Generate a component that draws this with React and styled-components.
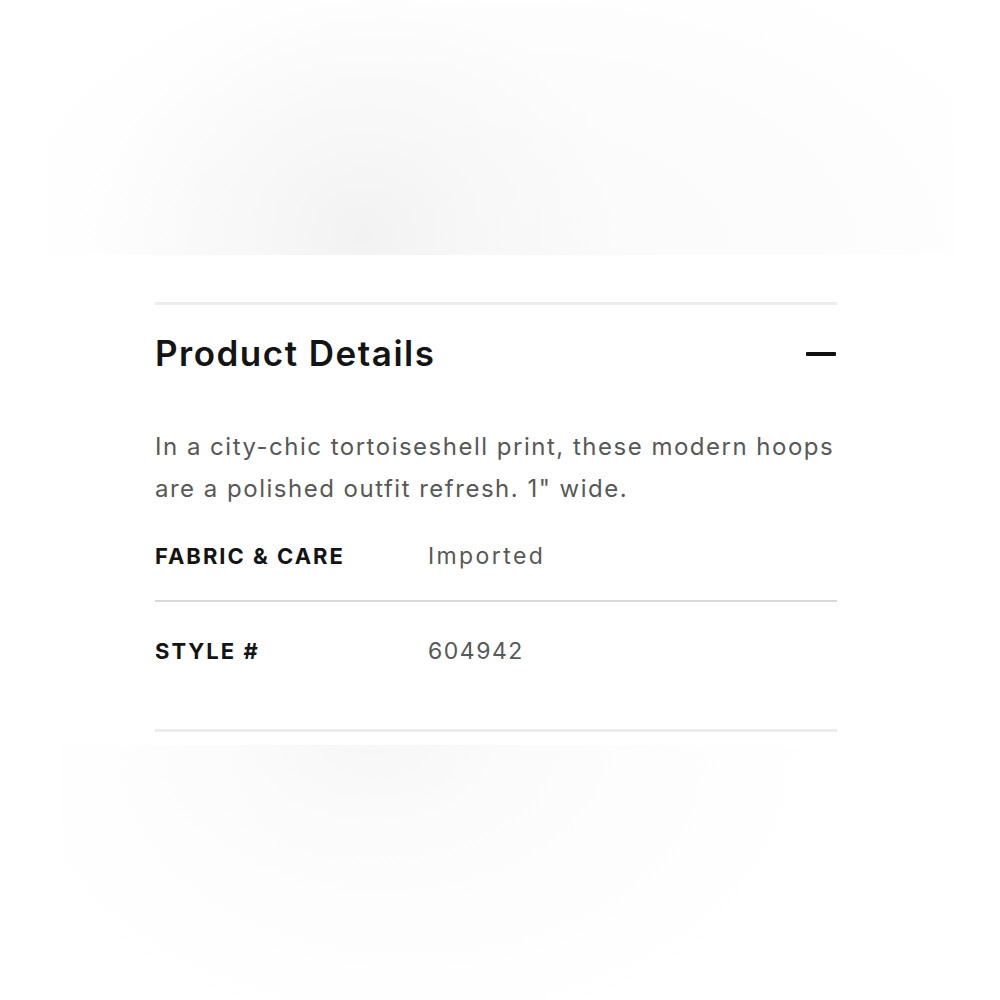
import styled, { createGlobalStyle } from "styled-components";

const GlobalStyle = createGlobalStyle`
  html, body {
    margin: 0;
    padding: 0;
    background: #ffffff;
  }
  body {
    font-family: "Inter", "Noto Sans", sans-serif;
    -webkit-font-smoothing: antialiased;
  }
`;

const Page = styled.div`
  width: 1000px;
  min-height: 1000px;
  overflow: hidden;
  background: #ffffff;
`;

// soft, blurred product shots above and below the panel
const TopGlow = styled.div`
  height: 255px;
  margin: 0 45px;
  background:
    radial-gradient(ellipse 260px 240px at 35% 92%, #f2f2f2 0%, rgba(246, 246, 246, 0.7) 45%, rgba(255, 255, 255, 0) 100%),
    radial-gradient(ellipse 560px 330px at 52% 100%, #fafafa 0%, #fcfcfc 55%, rgba(255, 255, 255, 0) 100%);
`;

const BottomGlow = styled.div`
  height: 255px;
  margin: 13px 160px 0 60px;
  background:
    radial-gradient(ellipse 240px 150px at 40% 0%, #f7f7f7 0%, rgba(250, 250, 250, 0.6) 55%, rgba(255, 255, 255, 0) 100%),
    radial-gradient(ellipse 430px 290px at 45% 5%, #fbfbfb 0%, #fdfdfd 60%, rgba(255, 255, 255, 0) 100%);
`;

const Panel = styled.section`
  margin: 47px 163px 0 155px;
  border-top: 3px solid #ececec;
  border-bottom: 3px solid #ececec;
`;

const Header = styled.div`
  display: flex;
  align-items: center;
  justify-content: space-between;
  padding-top: 28px;
`;

const Title = styled.h2`
  margin: 0;
  font-size: 35px;
  line-height: 41px;
  font-weight: 600;
  letter-spacing: 1.5px;
  color: #141414;
`;

const Collapse = styled.span`
  display: block;
  width: 30px;
  height: 4px;
  margin-right: 1px;
  background: #111111;
  border-radius: 1px;
`;

const Description = styled.p`
  margin: 52px 0 0;
  font-size: 24px;
  line-height: 42px;
  font-weight: 400;
  letter-spacing: 1.5px;
  white-space: nowrap;
  color: #585858;
`;

const Row = styled.div`
  display: grid;
  grid-template-columns: 273px 1fr;
  align-items: center;
  padding: ${(p) => p.$pad};
  border-top: ${(p) => (p.$divided ? "2px solid #d9d9d9" : "none")};
`;

const Label = styled.span`
  font-size: 22px;
  line-height: 30px;
  font-weight: 700;
  letter-spacing: 2px;
  color: #141414;
`;

const Value = styled.span`
  font-size: 23px;
  line-height: 30px;
  font-weight: 400;
  letter-spacing: ${(p) => (p.$numeric ? "1.5px" : "2.4px")};
  color: #585858;
`;

export default function App() {
  return (
    <Page>
      <GlobalStyle />
      <TopGlow />
      <Panel>
        <Header>
          <Title>Product Details</Title>
          <Collapse aria-label="Collapse" />
        </Header>
        <Description>
          In a city-chic tortoiseshell print, these modern hoops
          <br />
          are a polished outfit refresh. 1" wide.
        </Description>
        <Row $pad="31px 0 29px">
          <Label>FABRIC &amp; CARE</Label>
          <Value>Imported</Value>
        </Row>
        <Row $divided $pad="34px 0 63px">
          <Label>STYLE #</Label>
          <Value $numeric>604942</Value>
        </Row>
      </Panel>
      <BottomGlow />
    </Page>
  );
}
